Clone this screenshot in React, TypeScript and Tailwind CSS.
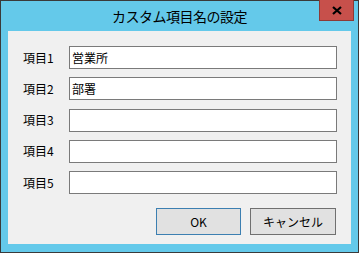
const fields = [
  { label: "項目1", value: "営業所" },
  { label: "項目2", value: "部署" },
  { label: "項目3", value: "" },
  { label: "項目4", value: "" },
  { label: "項目5", value: "" },
];

const font = { fontFamily: '"Noto Sans CJK JP", "Noto Sans", sans-serif' };

export default function App() {
  return (
    <div
      style={font}
      className="w-[359px] h-[253px] border border-[#3a3a3a] bg-[#64c9ea] flex flex-col text-black"
    >
      {/* title bar */}
      <div className="relative h-[30px] shrink-0 flex items-center justify-center">
        <span className="text-[14px] tracking-[-0.5px] leading-none -mt-[1px]">カスタム項目名の設定</span>
        <div className="absolute right-[4px] -top-[1px] w-[35px] h-[21px] bg-[#c7504b] border border-[#8d3a36] border-t-0 flex items-center justify-center">
          <svg width="10" height="9" viewBox="0 0 10 9">
            <path d="M1 1 L9 8 M9 1 L1 8" stroke="#000" strokeWidth="2.2" />
          </svg>
        </div>
      </div>

      {/* client area */}
      <div className="mx-[7px] h-[213px] bg-[#f0f0f0] pt-[15px] pl-[15px] pr-[14px] flex flex-col">
        <div className="flex flex-col gap-[8.25px]">
          {fields.map((f) => (
            <div key={f.label} className="flex items-center h-[23px]">
              <span className="w-[46px] text-[12px] leading-none">{f.label}</span>
              <div className="flex-1 h-[23px] bg-white border border-[#7a7a7a] flex items-center pl-[2px] text-[12px] leading-none">
                {f.value}
              </div>
            </div>
          ))}
        </div>
        <div className="flex justify-end gap-[9px] mt-[14px] pr-[1px]">
          <div className="w-[85px] h-[27px] bg-[#e1e1e1] border border-[#3c7fb1] flex items-center justify-center text-[12px]">
            OK
          </div>
          <div className="w-[86px] h-[27px] bg-[#e1e1e1] border border-[#707070] flex items-center justify-center text-[12px]">
            キャンセル
          </div>
        </div>
      </div>
    </div>
  );
}
